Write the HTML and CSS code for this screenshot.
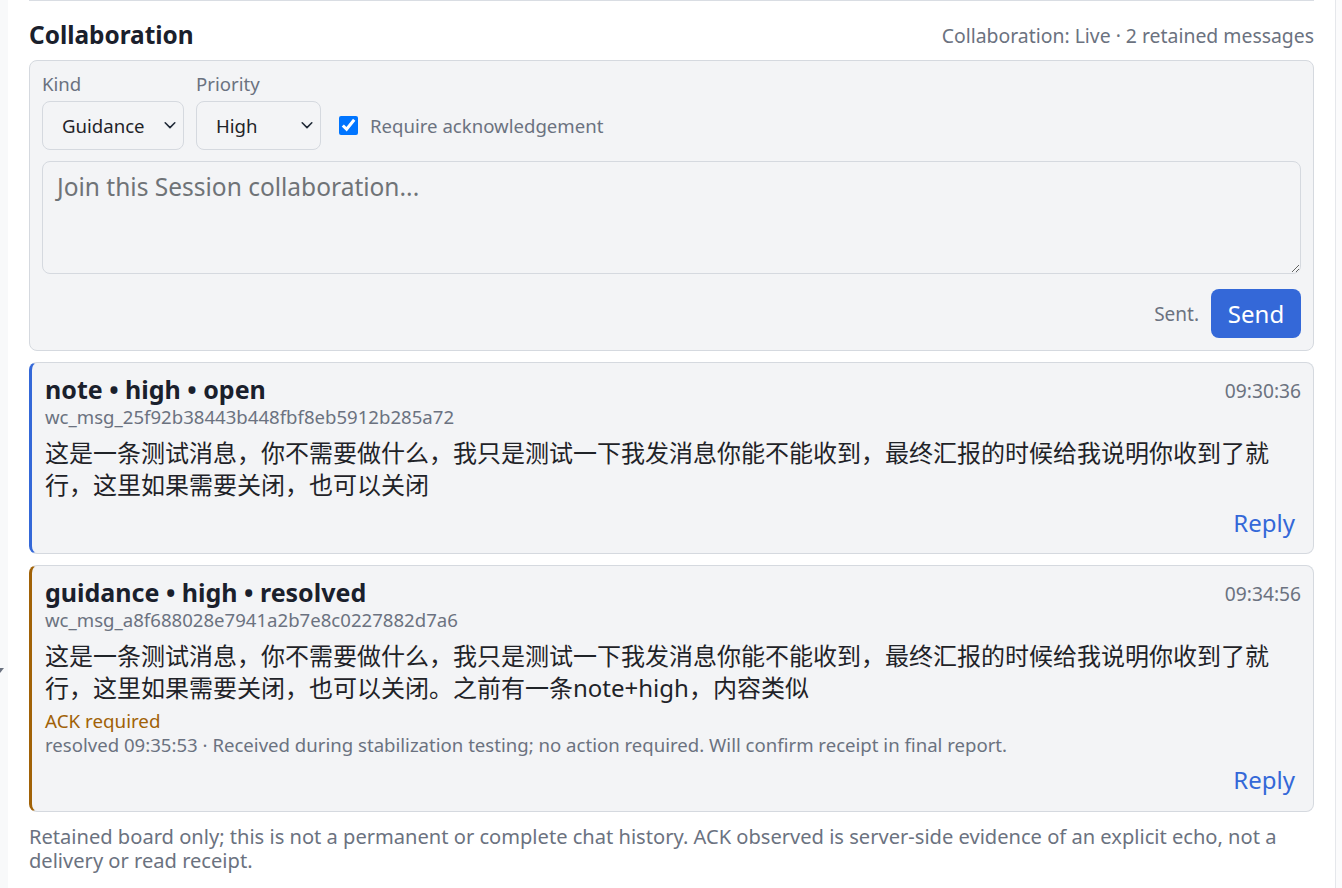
FILE: index.html
```html
<!DOCTYPE html>
<html lang="en">
<head>
<meta charset="utf-8">
<title>Collaboration</title>
<link rel="stylesheet" href="styles.css">
</head>
<body>
<div class="layout">
  <aside class="rail-left"><span class="rail-caret"></span></aside>
  <main class="main">
    <section class="collab">
      <header class="collab-head">
        <h2 class="collab-title">Collaboration</h2>
        <span class="collab-status">Collaboration: Live · 2 retained messages</span>
      </header>

      <form class="composer">
        <div class="composer-opts">
          <label class="field">
            <span class="field-label">Kind</span>
            <span class="select-wrap select-kind">
              <select class="select">
                <option>Note</option>
                <option selected>Guidance</option>
              </select>
              <svg class="chev" viewBox="0 0 16 16" width="14" height="14"><path d="M2.5 5.5 8 11l5.5-5.5" fill="none" stroke="#1f2937" stroke-width="1.8" stroke-linecap="round" stroke-linejoin="round"/></svg>
            </span>
          </label>
          <label class="field">
            <span class="field-label">Priority</span>
            <span class="select-wrap select-prio">
              <select class="select">
                <option>Normal</option>
                <option selected>High</option>
              </select>
              <svg class="chev" viewBox="0 0 16 16" width="14" height="14"><path d="M2.5 5.5 8 11l5.5-5.5" fill="none" stroke="#1f2937" stroke-width="1.8" stroke-linecap="round" stroke-linejoin="round"/></svg>
            </span>
          </label>
          <label class="ack-check">
            <input type="checkbox" checked>
            <span>Require acknowledgement</span>
          </label>
        </div>
        <textarea class="composer-input" placeholder="Join this Session collaboration..."></textarea>
        <div class="composer-actions">
          <span class="sent">Sent.</span>
          <button type="button" class="btn-send">Send</button>
        </div>
      </form>

      <article class="msg msg-note">
        <div class="msg-head">
          <div class="msg-meta">
            <div class="msg-title">note • high • open</div>
            <div class="msg-id">wc_msg_25f92b38443b448fbf8eb5912b285a72</div>
          </div>
          <span class="msg-time">09:30:36</span>
        </div>
        <p class="msg-body">这是一条测试消息，你不需要做什么，我只是测试一下我发消息你能不能收到，最终汇报的时候给我说明你收到了就行，这里如果需要关闭，也可以关闭</p>
        <div class="msg-actions"><button type="button" class="btn-reply">Reply</button></div>
      </article>

      <article class="msg msg-guidance">
        <div class="msg-head">
          <div class="msg-meta">
            <div class="msg-title">guidance • high • resolved</div>
            <div class="msg-id">wc_msg_a8f688028e7941a2b7e8c0227882d7a6</div>
          </div>
          <span class="msg-time">09:34:56</span>
        </div>
        <p class="msg-body">这是一条测试消息，你不需要做什么，我只是测试一下我发消息你能不能收到，最终汇报的时候给我说明你收到了就行，这里如果需要关闭，也可以关闭。之前有一条note+high，内容类似</p>
        <div class="msg-ack">ACK required</div>
        <div class="msg-resolution">resolved 09:35:53 · Received during stabilization testing; no action required. Will confirm receipt in final report.</div>
        <div class="msg-actions"><button type="button" class="btn-reply">Reply</button></div>
      </article>

      <p class="collab-note">Retained board only; this is not a permanent or complete chat history. ACK observed is server-side evidence of an explicit echo, not a delivery or read receipt.</p>
    </section>
  </main>
  <aside class="rail-right"></aside>
</div>
</body>
</html>
```

FILE: styles.css
```css
* { box-sizing: border-box; }

html, body {
  margin: 0;
  height: 100%;
  background: #ffffff;
  overflow: hidden;
}

body {
  font-family: "Noto Sans", "Noto Sans CJK SC", sans-serif;
  color: #1f2328;
}

.layout {
  display: flex;
  height: 888px;
}

/* side rails of neighbouring panes */
.rail-left {
  flex: 0 0 8px;
  background: #f8f9fa;
  padding-top: 668px;
}

.rail-caret {
  display: block;
  width: 0;
  height: 0;
  border-top: 5px solid #6b7280;
  border-right: 4px solid transparent;
}

.rail-right {
  flex: 0 0 7px;
  background: #fbfbfc;
  border-left: 1px solid #e5e7eb;
}

.main {
  flex: 1;
  padding: 0 21px;
  min-width: 0;
}

.collab {
  border-top: 1px solid #d9dde3;
}

/* header */
.collab-head {
  display: flex;
  justify-content: space-between;
  align-items: center;
  height: 59px;
  padding-top: 7px;
}

.collab-title {
  margin: 0;
  font-size: 24.4px;
  font-weight: 700;
  color: #1a202c;
}

.collab-status {
  font-size: 19.4px;
  color: #6b7280;
  padding-top: 2px;
}

/* composer */
.composer {
  background: #f3f4f6;
  border: 1px solid #d5d9df;
  border-radius: 8px;
  padding: 11px 12px 12px;
  display: flex;
  flex-direction: column;
}

.composer-opts {
  display: flex;
  align-items: flex-end;
  gap: 12px;
}

.field {
  display: flex;
  flex-direction: column;
  gap: 5px;
}

.field-label {
  font-size: 18.6px;
  line-height: 24px;
  color: #6b7280;
}

.select-wrap {
  position: relative;
  display: block;
}

.select {
  appearance: none;
  -webkit-appearance: none;
  height: 49px;
  border: 1px solid #d5d9df;
  border-radius: 8px;
  background: #f3f4f6;
  font: inherit;
  font-size: 18.6px;
  color: #1f2328;
  padding: 0 30px 0 19px;
}

.select-kind .select { width: 142px; }
.select-prio .select { width: 125px; }

.chev {
  position: absolute;
  right: 7px;
  top: 17px;
  pointer-events: none;
}

.ack-check {
  display: flex;
  align-items: center;
  gap: 12px;
  height: 49px;
  margin-left: 6px;
  font-size: 18.6px;
  color: #6b7280;
}

.ack-check input {
  width: 19px;
  height: 19px;
  margin: 0;
}

.composer-input {
  margin-top: 11px;
  height: 113px;
  resize: vertical;
  border: 1px solid #d5d9df;
  border-radius: 8px;
  background: #f3f4f6;
  font: inherit;
  font-size: 24.5px;
  padding: 8px 14px;
  color: #1f2328;
}

.composer-input::placeholder {
  color: #6f7377;
}

.composer-actions {
  margin-top: 15px;
  display: flex;
  justify-content: flex-end;
  align-items: center;
  gap: 12px;
}

.sent {
  font-size: 19px;
  color: #6b7280;
}

.btn-send {
  width: 90px;
  height: 49px;
  border: 0;
  border-radius: 8px;
  background: #3468d8;
  color: #ffffff;
  font: inherit;
  font-size: 24px;
}

/* messages */
.msg {
  margin-top: 11px;
  background: #f3f4f6;
  border: 1px solid #d5d9df;
  border-left: 3px solid #3468d8;
  border-radius: 8px;
  padding: 11px 12px 13px 13px;
}

.msg-guidance {
  border-left-color: #a16207;
  padding-bottom: 14px;
}

.msg-head {
  display: flex;
  justify-content: space-between;
  align-items: flex-start;
}

.msg-title {
  font-size: 25px;
  font-weight: 700;
  line-height: 31px;
  color: #1a202c;
}

.msg-id {
  font-size: 18.6px;
  line-height: 24px;
  color: #6b7280;
}

.msg-time {
  font-size: 19.2px;
  color: #6b7280;
  margin-top: 3px;
}

.msg-body {
  margin: 8px 0 0;
  font-size: 24px;
  line-height: 32px;
  color: #1f2328;
}

.msg-ack {
  margin-top: 5px;
  font-size: 18.8px;
  line-height: 24px;
  color: #a16207;
}

.msg-resolution {
  font-size: 18.6px;
  line-height: 24px;
  color: #6b7280;
  margin-bottom: 6px;
}

.msg-actions {
  display: flex;
  justify-content: flex-end;
  margin-top: 5px;
}

.btn-reply {
  border: 0;
  background: transparent;
  font: inherit;
  font-size: 24px;
  line-height: 34px;
  color: #3468d8;
  padding: 0 6px;
}

.collab-note {
  margin: 13px 0 0;
  font-size: 20.1px;
  line-height: 24px;
  color: #6b7280;
}
```
